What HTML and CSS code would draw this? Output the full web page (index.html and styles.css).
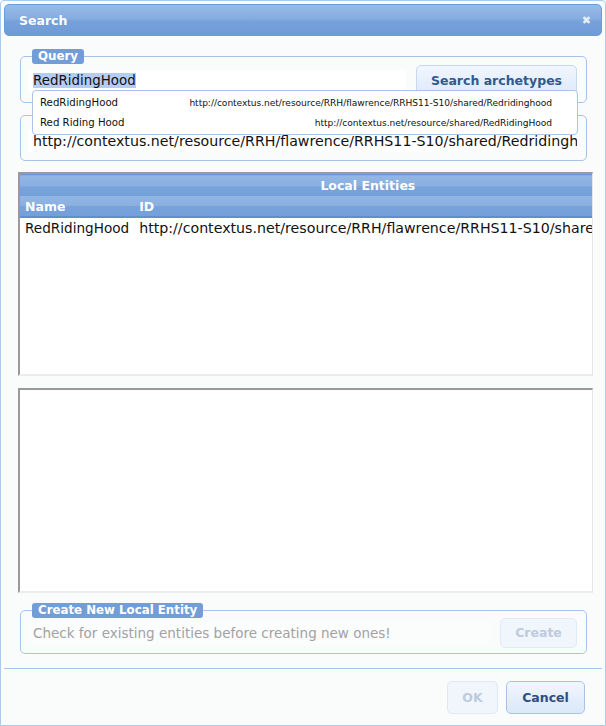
FILE: index.html
```html
<!DOCTYPE html>
<html>
<head>
<meta charset="utf-8">
<link rel="stylesheet" href="styles.css">
</head>
<body>
<div class="dialog">
  <div class="titlebar">
    <span class="title">Search</span>
    <span class="close">&#x2716;</span>
  </div>
  <div class="content">
    <div class="group query">
      <div class="legend">Query</div>
      <div class="row">
        <div class="field"><span class="sel">RedRidingHood</span></div>
        <div class="btn btn-search">Search archetypes</div>
      </div>
      <div class="dropdown">
        <div class="opt"><span class="opt-name">RedRidingHood</span><span class="opt-url">http://contextus.net/resource/RRH/flawrence/RRHS11-S10/shared/Redridinghood</span></div>
        <div class="opt"><span class="opt-name">Red Riding Hood</span><span class="opt-url">http://contextus.net/resource/shared/RedRidingHood</span></div>
      </div>
    </div>
    <div class="group idgroup">
      <div class="field idfield">http://contextus.net/resource/RRH/flawrence/RRHS11-S10/shared/Redridinghood</div>
    </div>
    <div class="box tablebox">
      <table class="grid">
        <thead>
          <tr class="caption"><th colspan="2">Local Entities</th></tr>
          <tr class="cols"><th class="c1">Name</th><th class="c2">ID</th></tr>
        </thead>
        <tbody>
          <tr><td class="c1">RedRidingHood</td><td class="c2">http://contextus.net/resource/RRH/flawrence/RRHS11-S10/shared/Redridinghood</td></tr>
        </tbody>
      </table>
    </div>
    <div class="box emptybox"></div>
    <div class="group create">
      <div class="legend">Create New Local Entity</div>
      <div class="row">
        <div class="field placeholder">Check for existing entities before creating new ones!</div>
        <div class="btn btn-create">Create</div>
      </div>
    </div>
  </div>
  <div class="footer">
    <div class="btn btn-ok">OK</div>
    <div class="btn btn-cancel">Cancel</div>
  </div>
</div>
</body>
</html>
```

FILE: styles.css
```css
html, body {
  margin: 0;
  padding: 0;
  background: #ffffff;
}
body {
  font-family: "DejaVu Sans", "Liberation Sans", sans-serif;
  font-size: 13px;
  color: #111;
}
.dialog {
  width: 606px;
  height: 726px;
  box-sizing: border-box;
  border: 1px solid #a9cbee;
  border-radius: 4px 4px 0 0;
  background: #fafcfc;
  padding: 3px;
  display: flex;
  flex-direction: column;
}
.titlebar {
  height: 32px;
  flex: none;
  box-sizing: border-box;
  border: 1px solid #6f9bd4;
  border-radius: 5px;
  background: linear-gradient(#98bbe6, #86ade0 45%, #77a1da 55%, #6e9ad6);
  display: flex;
  align-items: center;
  justify-content: space-between;
  padding: 0 10px 0 14px;
  color: #fff;
}
.title {
  font-weight: bold;
  font-size: 12.5px;
  text-shadow: 0 0 1px rgba(60,100,160,0.3);
}
.close {
  font-size: 11px;
  color: #e6eef9;
  font-weight: bold;
}
.content {
  padding: 0 9px 0 14px;
  display: flex;
  flex-direction: column;
}
.group {
  border: 1px solid #a6c3e8;
  border-radius: 5px;
  margin: 0 6px 0 2px;
  position: relative;
  box-sizing: border-box;
}
.legend {
  display: block;
  width: fit-content;
  margin: -8px 0 0 11px;
  height: 15px;
  line-height: 15px;
  padding: 0 6px;
  border-radius: 3px;
  background: #729dd6;
  color: #fff;
  font-weight: bold;
  font-size: 11.8px;
}
.query {
  margin-top: 20px;
  height: 47px;
}
.row {
  display: flex;
  align-items: center;
  padding: 0 9px 0 7px;
}
.query .row {
  margin-top: 1px;
  height: 35px;
  align-items: flex-start;
}
.field {
  flex: 1;
  height: 22px;
  line-height: 22px;
  background: #fff;
  padding-left: 5px;
  white-space: nowrap;
  overflow: hidden;
}
.query .field {
  margin-top: 5px;
  font-size: 13.4px;
}
.sel {
  background: #b5cdf4;
}
.btn {
  box-sizing: border-box;
  border: 1px solid #c6d9f1;
  border-radius: 5px;
  background: linear-gradient(#f2f7fe, #e5eefb 50%, #dce8f9);
  color: #30598f;
  font-weight: bold;
  text-align: center;
}
.btn-search {
  width: 161px;
  height: 35px;
  line-height: 30px;
  font-size: 12.5px;
  margin-left: 10px;
}
.dropdown {
  position: absolute;
  left: 11px;
  top: 33px;
  width: 546px;
  height: 45px;
  box-sizing: border-box;
  border: 1px solid #a9c4e6;
  border-radius: 4px;
  background: #fff;
  padding-top: 2px;
  z-index: 2;
}
.opt {
  height: 20px;
  line-height: 20px;
  display: flex;
  justify-content: space-between;
  align-items: baseline;
  padding: 0 25px 0 7px;
}
.opt-name {
  font-size: 10.2px;
}
.opt-url {
  font-size: 9.1px;
  letter-spacing: -0.05px;
}
.idgroup {
  margin-top: 12px;
  height: 46px;
}
.idfield {
  margin: 14px 9px 0 7px;
  font-size: 14.2px;
  height: 22px;
}
.box {
  box-sizing: border-box;
  border-top: 2px solid #9a9a9a;
  border-left: 2px solid #9a9a9a;
  border-right: 1px solid #e6e6e6;
  border-bottom: 2px solid #ececec;
  background: #fff;
  overflow: hidden;
  width: 575px;
  flex: none;
}
.tablebox {
  margin-top: 11px;
  height: 204px;
}
.emptybox {
  margin-top: 12px;
  height: 205px;
}
.grid {
  border-collapse: collapse;
  width: 694px;
  font-size: 13.6px;
}
.grid th {
  color: #fff;
  font-weight: bold;
  text-align: left;
  padding: 0 5px;
  background: linear-gradient(#93b7e4, #89afe1 50%, #78a2da 52%, #73a0da);
}
.caption th {
  height: 21px;
  text-align: center;
  font-size: 12.5px;
  border-top: 1px solid #6c99d6;
}
.cols th {
  height: 20px;
  font-size: 12.5px;
  border-bottom: 2px solid #5f8fd2;
}
.grid td {
  height: 19px;
  padding: 0 5px;
  white-space: nowrap;
}
.grid td.c2 {
  font-size: 14.2px;
}
.c1 {
  width: 105px;
}
.create {
  margin-top: 17px;
  height: 44px;
}
.create .row {
  height: 31px;
  margin-top: -1px;
}
.placeholder {
  background: #fbfcfc;
  color: #a2a2a2;
  font-size: 13.5px;
}
.btn-create {
  width: 77px;
  height: 30px;
  line-height: 28px;
  font-size: 12.5px;
  color: #bccbde;
  border-color: #e1eaf6;
  background: #f1f6fd;
  margin-left: 10px;
}
.footer {
  margin-top: auto;
  border-top: 1px solid #a9c5e8;
  height: 54px;
  display: flex;
  justify-content: flex-end;
  align-items: flex-start;
  padding: 12px 17px 0 0;
  box-sizing: border-box;
  gap: 8px;
}
.btn-ok {
  width: 51px;
  height: 33px;
  line-height: 31px;
  font-size: 12.5px;
  color: #bccbde;
  border-color: #dfe8f5;
  background: #f1f6fd;
}
.btn-cancel {
  width: 79px;
  height: 33px;
  line-height: 31px;
  font-size: 12.5px;
  color: #2c4f83;
  border-color: #a9c3e6;
}
```
